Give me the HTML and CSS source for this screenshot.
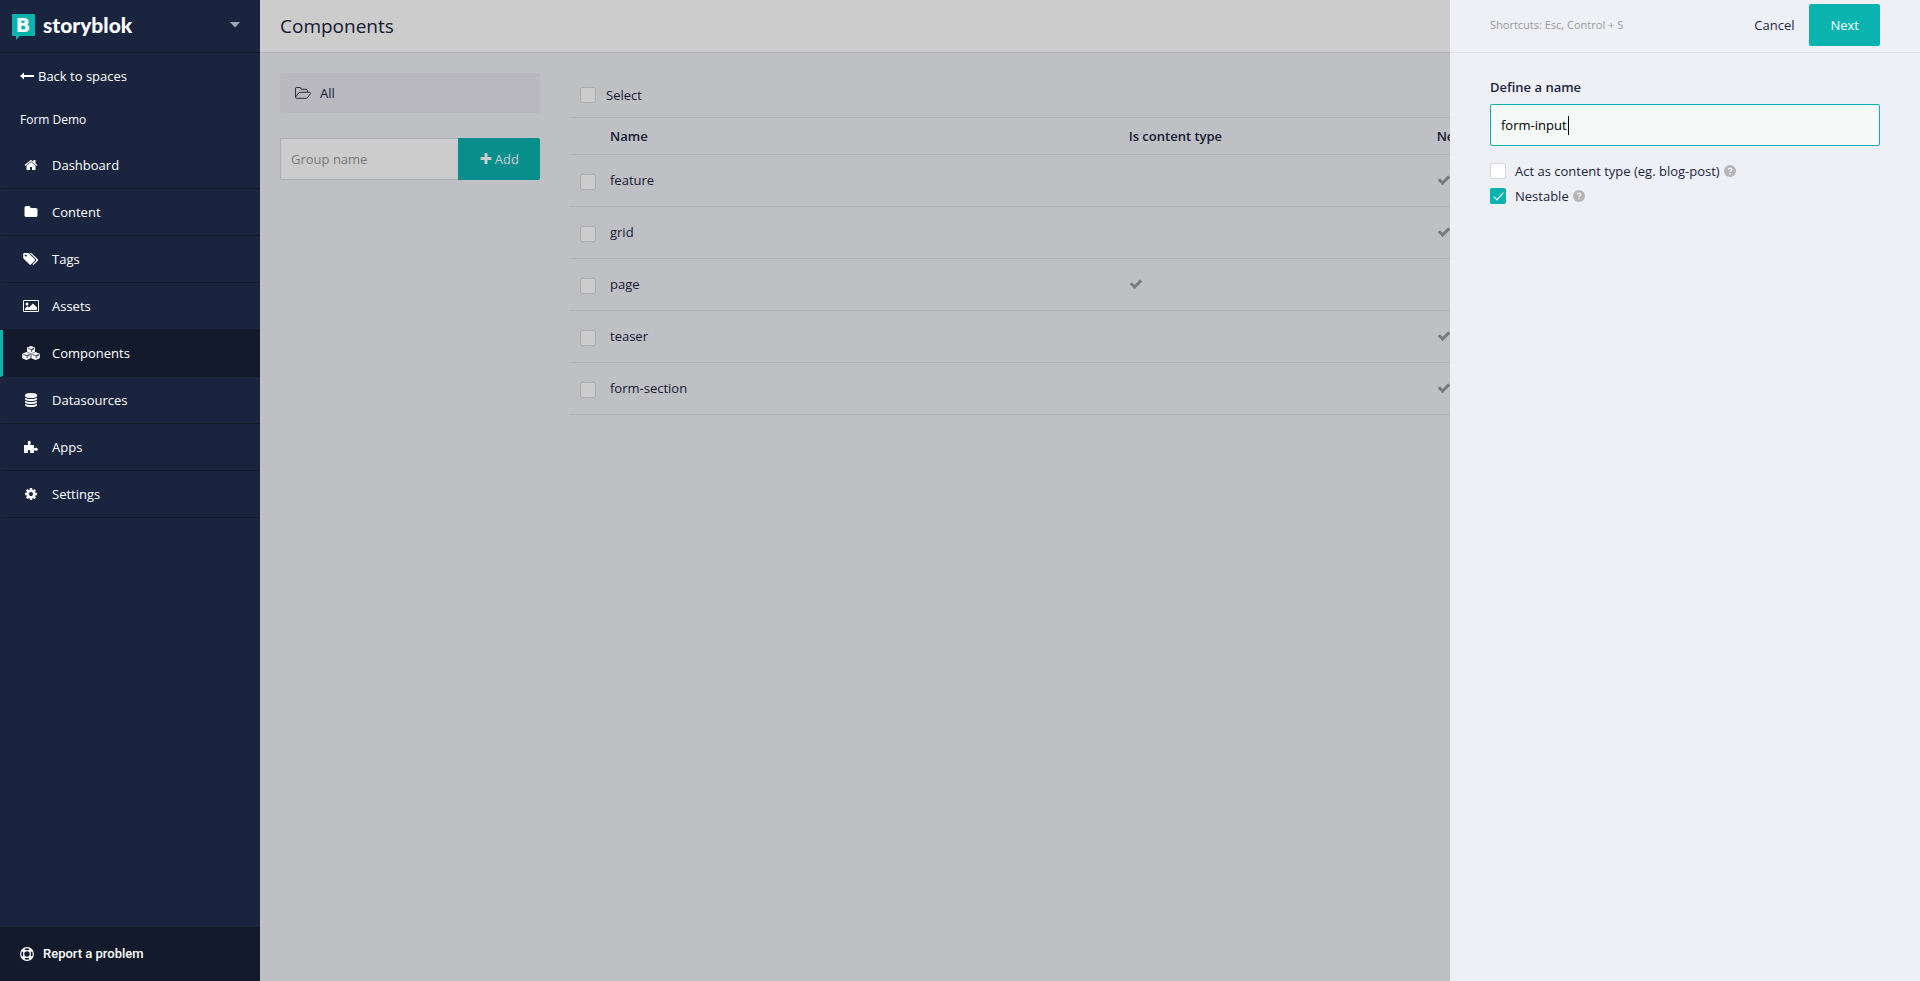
FILE: index.html
```html
<!DOCTYPE html>
<html lang="en">
<head>
    <meta charset="UTF-8">
    <meta name="viewport" content="width=device-width, initial-scale=1.0">
    <title>Components | Storyblok</title>
    <link rel="stylesheet" href="styles.css">
</head>
<body>
    <svg class="sprite" aria-hidden="true">
        <symbol id="check" viewBox="0 0 1792 1792"><path d="M1671 566q0 40-28 68l-724 724-136 136q-28 28-68 28t-68-28l-136-136-362-362q-28-28-28-68t28-68l136-136q28-28 68-28t68 28l294 295 656-657q28-28 68-28t68 28l136 136q28 28 28 68z"/></symbol>
        <symbol id="help" viewBox="0 0 12 12"><circle cx="6" cy="6" r="6"/><path d="M4.200 4.700C4.400 3.700 5.100 3.200 6 3.200c1 0 1.800.5 1.800 1.400C7.800 5.800 6 5.800 6 7" fill="none" stroke="#eff0f5" stroke-width="1.400"/><path d="M5.300 8h1.500v1.400H5.300z" fill="#eff0f5"/></symbol>
    </svg>

    <div class="app">
        <aside class="sidebar">
            <div class="sidebar-top">
                <a href="#" class="logo">
                    <svg width="23" height="27" viewBox="0 0 23 27">
                        <path fill="#0ab3af" d="M1 0h21a1 1 0 0 1 1 1v20a1 1 0 0 1-1 1H8l-4 4v-4H1a1 1 0 0 1-1-1V1a1 1 0 0 1 1-1z"/>
                        <text class="logo-letter" x="11" y="18" text-anchor="middle">B</text>
                    </svg>
                    <span>storyblok</span>
                </a>
                <button class="caret-button" aria-label="Open menu">
                    <svg width="10" height="6" viewBox="0 0 10 6"><path fill="#a4a8b4" d="M0 0h10L5 5.500z"/></svg>
                </button>
            </div>

            <a href="#" class="back-link">
                <svg width="14" height="8" viewBox="0 0 14 8"><path d="M0 4l4-3.500V3h10v2H4v2.500z"/></svg>
                <span>Back to spaces</span>
            </a>
            <div class="space-name">Form Demo</div>

            <nav class="nav">
                <a href="#" class="nav-item">
                    <svg class="nav-icon" viewBox="0 0 1792 1792"><path d="M1472 992v480q0 26-19 45t-45 19h-384v-384h-256v384h-384q-26 0-45-19t-19-45v-480q0-1 .5-3t.5-3l575-474 575 474q1 2 1 6zm223-69l-62 74q-8 9-21 11h-3q-13 0-21-7l-692-577-692 577q-12 8-24 7-13-2-21-11l-62-74q-8-10-7-23.500t11-21.500l719-599q32-26 76-26t76 26l244 204v-195q0-14 9-23t23-9h192q14 0 23 9t9 23v408l219 182q10 8 11 21.500t-7 23.500z"/></svg>
                    <span>Dashboard</span>
                </a>
                <a href="#" class="nav-item">
                    <svg class="nav-icon" viewBox="0 0 1792 1792"><path d="M1728 608v704q0 92-66 158t-158 66h-1216q-92 0-158-66t-66-158v-960q0-92 66-158t158-66h320q92 0 158 66t66 158v32h672q92 0 158 66t66 158z"/></svg>
                    <span>Content</span>
                </a>
                <a href="#" class="nav-item">
                    <svg class="nav-icon" viewBox="0 0 1856 1792"><path d="M384 448q0-53-37.500-90.500t-90.500-37.500-90.500 37.500-37.500 90.500 37.500 90.500 90.500 37.500 90.500-37.500 37.500-90.500zm1067 576q0 53-37 90l-491 492q-39 37-91 37-53 0-90-37l-715-716q-38-37-64.500-101t-26.500-117v-416q0-52 38-90t90-38h416q53 0 117 26.500t102 64.500l715 714q37 39 37 91zm384 0q0 53-37 90l-491 492q-39 37-91 37-36 0-59-14t-53-45l470-470q37-37 37-90 0-52-37-91l-715-714q-38-38-102-64.500t-117-26.500h224q53 0 117 26.500t102 64.500l715 714q37 39 37 91z"/></svg>
                    <span>Tags</span>
                </a>
                <a href="#" class="nav-item">
                    <svg class="nav-icon" viewBox="0 0 16 14"><path fill-rule="evenodd" d="M1.200 1h13.600A1.200 1.200 0 0 1 16 2.200v9.600a1.200 1.200 0 0 1-1.200 1.200H1.200A1.200 1.200 0 0 1 0 11.800V2.200A1.200 1.200 0 0 1 1.200 1zM1 2v10h14V2z"/><circle cx="4" cy="5" r="1.500"/><path d="M2 11V9.500L4.500 7 6 8.500 10 4.500l4 4V11z"/></svg>
                    <span>Assets</span>
                </a>
                <a href="#" class="nav-item active">
                    <svg class="nav-icon nav-icon-wide" viewBox="0 0 18 14"><path d="M9 0l4 1.600v4.200L9 7.600 5 5.800V1.600zM4.400 6l4.200 1.700v4.500L4.400 14 .2 12.200V7.700zM13.600 6l4.200 1.700v4.500L13.600 14l-4.200-1.800V7.700z"/><path class="cube-edge" d="M6 2.200l3 1.300 3-1.300M9.600 5.900V4l2.400-1M1.200 8.300l3.200 1.400 3.200-1.400M5 12.300v-2l2.600-1.100M10.400 8.300l3.200 1.400 3.200-1.400M14.200 12.300v-2l2.600-1.100"/></svg>
                    <span>Components</span>
                </a>
                <a href="#" class="nav-item">
                    <svg class="nav-icon" viewBox="0 0 1792 1792"><path d="M896 768q237 0 443-43t325-127v170q0 69-103 128t-280 93.500-385 34.500-385-34.500-280-93.500-103-128v-170q119 84 325 127t443 43zm0 768q237 0 443-43t325-127v170q0 69-103 128t-280 93.500-385 34.500-385-34.500-280-93.500-103-128v-170q119 84 325 127t443 43zm0-384q237 0 443-43t325-127v170q0 69-103 128t-280 93.500-385 34.500-385-34.500-280-93.500-103-128v-170q119 84 325 127t443 43zm0-1152q208 0 385 34.500t280 93.500 103 128v128q0 69-103 128t-280 93.500-385 34.500-385-34.500-280-93.500-103-128v-128q0-69 103-128t280-93.500 385-34.500z"/></svg>
                    <span>Datasources</span>
                </a>
                <a href="#" class="nav-item">
                    <svg class="nav-icon" viewBox="0 0 14 14"><path d="M0 5h3.600c.7 0 .7-.7.400-1.300C3.300 2.500 3.800.8 5.200.8s2 1.600 1.300 2.900c-.4.700-.2 1.300.5 1.300h3v2.600c0 .7.500.8 1.100.4 1.300-.8 2.700-.2 2.700 1.200s-1.400 2.100-2.700 1.300c-.6-.4-1.100-.2-1.100.4V13H6.600c-.8 0-.8-.6-.4-1.200.5-1-.1-1.800-1.100-1.800s-1.700.8-1.200 1.800c.3.600.3 1.200-.4 1.200H0z"/></svg>
                    <span>Apps</span>
                </a>
                <a href="#" class="nav-item">
                    <svg class="nav-icon" viewBox="0 0 1792 1792"><path d="M1152 896q0-106-75-181t-181-75-181 75-75 181 75 181 181 75 181-75 75-181zm512-109v222q0 12-8 23t-20 13l-185 28q-19 54-39 91 35 50 107 138 10 12 10 25t-9 23q-27 37-99 108t-94 71q-12 0-26-9l-138-108q-44 23-91 38-16 136-29 186-7 28-36 28h-222q-14 0-24.500-8.500t-11.500-21.500l-28-184q-49-16-90-37l-141 107q-10 9-25 9-14 0-25-11-126-114-165-168-7-10-7-23 0-12 8-23 15-21 51-66.500t54-70.500q-27-50-41-99l-183-27q-13-2-21-12.500t-8-23.500v-222q0-12 8-23t19-13l186-28q14-46 39-92-40-57-107-138-10-12-10-24 0-10 9-23 26-36 98.500-107.500t94.500-71.500q13 0 26 10l138 107q44-23 91-38 16-136 29-186 7-28 36-28h222q14 0 24.500 8.500t11.500 21.500l28 184q49 16 90 37l142-107q9-9 24-9 13 0 25 10 129 119 165 170 7 8 7 22 0 12-8 23-15 21-51 66.500t-54 70.500q26 50 41 98l183 28q13 2 21 12.500t8 23.500z"/></svg>
                    <span>Settings</span>
                </a>
            </nav>

            <a href="#" class="report">
                <svg width="14" height="14" viewBox="0 0 14 14" fill="none"><circle cx="7" cy="7" r="6.300" stroke="#fff" stroke-width="1.200"/><circle cx="7" cy="7" r="3.300" stroke="#fff" stroke-width="1.200"/><g stroke="#fff" stroke-width="3.200"><path d="M4.700 4.700L2.700 2.700M9.300 4.700l2-2M4.700 9.300l-2 2M9.300 9.300l2 2"/></g></svg>
                <span>Report a problem</span>
            </a>
        </aside>

        <div class="main">
            <header class="page-header">
                <h1>Components</h1>
            </header>

            <div class="content">
                <div class="groups">
                    <a href="#" class="group">
                        <svg width="16" height="12" viewBox="0 0 16 12" fill="none" stroke="#3a3a50"><path d="M.5 10V2A1.300 1.300 0 0 1 1.800.5h3A1.300 1.300 0 0 1 6.100 1.800v.5h5A1.300 1.300 0 0 1 12.400 3.600V5M1.400 11.300h9.800c.5 0 1-.3 1.400-.7l2.600-3.600c.6-.9.300-1.700-.7-1.700H5c-.5 0-1 .300-1.400.7L.9 9.600c-.6.900-.3 1.700.5 1.700z"/></svg>
                        <span>All</span>
                    </a>
                    <form class="group-form">
                        <input type="text" placeholder="Group name" aria-label="Group name">
                        <button type="button" class="button">
                            <svg width="14" height="14" viewBox="0 0 1792 1792"><path d="M1600 736v192q0 40-28 68t-68 28h-416v416q0 40-28 68t-68 28h-192q-40 0-68-28t-28-68v-416h-416q-40 0-68-28t-28-68v-192q0-40 28-68t68-28h416v-416q0-40 28-68t68-28h192q40 0 68 28t28 68v416h416q40 0 68 28t28 68z"/></svg>
                            <span>Add</span>
                        </button>
                    </form>
                </div>

                <div class="list">
                    <label class="select-all">
                        <input type="checkbox" class="checkbox">
                        <span>Select</span>
                    </label>
                    <table class="table">
                        <thead>
                            <tr>
                                <th class="col-check"></th>
                                <th class="col-name">Name</th>
                                <th class="col-type">Is content type</th>
                                <th>Nestable</th>
                            </tr>
                        </thead>
                        <tbody>
                            <tr>
                                <td><input type="checkbox" class="checkbox" aria-label="feature"></td>
                                <td>feature</td>
                                <td></td>
                                <td><svg class="tick"><use href="#check"/></svg></td>
                            </tr>
                            <tr>
                                <td><input type="checkbox" class="checkbox" aria-label="grid"></td>
                                <td>grid</td>
                                <td></td>
                                <td><svg class="tick"><use href="#check"/></svg></td>
                            </tr>
                            <tr>
                                <td><input type="checkbox" class="checkbox" aria-label="page"></td>
                                <td>page</td>
                                <td><svg class="tick"><use href="#check"/></svg></td>
                                <td></td>
                            </tr>
                            <tr>
                                <td><input type="checkbox" class="checkbox" aria-label="teaser"></td>
                                <td>teaser</td>
                                <td></td>
                                <td><svg class="tick"><use href="#check"/></svg></td>
                            </tr>
                            <tr>
                                <td><input type="checkbox" class="checkbox" aria-label="form-section"></td>
                                <td>form-section</td>
                                <td></td>
                                <td><svg class="tick"><use href="#check"/></svg></td>
                            </tr>
                        </tbody>
                    </table>
                </div>
            </div>

            <div class="overlay"></div>
        </div>
    </div>

    <form class="drawer">
        <div class="drawer-header">
            <span class="shortcuts">Shortcuts: Esc, Control + S</span>
            <button type="button" class="cancel">Cancel</button>
            <button type="button" class="button">Next</button>
        </div>
        <div class="drawer-body">
            <label class="field-label" for="name">Define a name</label>
            <div class="field">
                <input type="text" id="name" value="form-input">
                <span class="text-cursor"></span>
            </div>
            <div class="options">
                <div class="option">
                    <input type="checkbox" class="checkbox" id="content-type">
                    <label for="content-type">Act as content type (eg. blog-post)</label>
                    <svg class="help"><use href="#help"/></svg>
                </div>
                <div class="option">
                    <input type="checkbox" class="checkbox" id="nestable" checked>
                    <label for="nestable">Nestable</label>
                    <svg class="help"><use href="#help"/></svg>
                </div>
            </div>
        </div>
    </form>
</body>
</html>
```

FILE: styles.css
```css
* {
    box-sizing: border-box;
}

body {
    margin: 0;
    font-family: "Open Sans", "Noto Sans", sans-serif;
    font-size: 13px;
    line-height: 20px;
    color: #1b243f;
    background: #eff0f5;
}

a {
    color: inherit;
    text-decoration: none;
}

input, button {
    font: inherit;
    color: inherit;
}

button {
    padding: 0;
    border: none;
    background: none;
    cursor: pointer;
}

.sprite {
    position: absolute;
    width: 0;
    height: 0;
}

.app {
    display: flex;
    min-height: 100vh;
}

/* Sidebar */
.sidebar {
    display: flex;
    flex-direction: column;
    flex: none;
    width: 260px;
    color: #fff;
    font-weight: 500;
    background: #1b243f;
}

.sidebar svg {
    fill: #fff;
}

.sidebar-top {
    display: flex;
    align-items: center;
    justify-content: space-between;
    height: 53px;
    padding: 0 20px 0 12px;
    border-bottom: 1px solid #131a2b;
}

.logo {
    display: flex;
    align-items: center;
    gap: 8px;
    font-family: Lato, sans-serif;
    font-size: 21px;
    font-weight: 900;
}

.logo svg {
    margin-top: 2px;
}

.logo span {
    padding-bottom: 2px;
}

.logo-letter {
    font-family: "DejaVu Sans", sans-serif;
    font-size: 19px;
    font-weight: 700;
}

.caret-button {
    display: flex;
    padding-bottom: 2px;
}

.back-link {
    display: flex;
    align-items: center;
    gap: 4px;
    height: 46px;
    padding: 0 20px;
}

.space-name {
    padding: 11px 20px 12px;
    font-size: 12px;
}

.nav-item {
    display: flex;
    align-items: center;
    gap: 13px;
    height: 47px;
    padding: 0 20px 1px;
    border-bottom: 1px solid #131a2b;
    border-left: 3px solid transparent;
}

.nav-item.active {
    border-left-color: #0ab3af;
    background: #131a2b;
}

.nav-icon {
    width: 16px;
    height: 14px;
}

.nav-icon-wide {
    width: 18px;
    margin: 0 -1px;
}

.cube-edge {
    fill: none;
    stroke: #131a2b;
    stroke-width: .8;
}

.report {
    display: flex;
    align-items: center;
    gap: 9px;
    height: 54px;
    margin-top: auto;
    padding: 0 20px;
    font-family: Roboto, sans-serif;
    background: #131a2b;
}

.report svg {
    fill: none;
}

/* Main area */
.main {
    position: relative;
    flex: 1;
    min-width: 0;
}

.overlay {
    position: absolute;
    inset: 0;
    background: rgba(0, 0, 0, 0.2);
}

.page-header {
    display: flex;
    align-items: center;
    height: 53px;
    padding: 0 20px;
    border-bottom: 1px solid #dfdfdf;
    background: #fff;
}

h1 {
    margin: 0;
    font-size: 19px;
    font-weight: 400;
}

.content {
    display: flex;
    gap: 30px;
    padding: 20px;
}

.groups {
    flex: none;
    width: 260px;
}

.group {
    display: flex;
    align-items: center;
    gap: 9px;
    height: 40px;
    padding: 0 15px;
    border-radius: 3px;
    background: #e6e7ee;
}

.group-form {
    display: flex;
    margin-top: 25px;
}

.group-form input {
    flex: 1;
    min-width: 0;
    height: 42px;
    padding: 0 10px;
    border: 1px solid #d8d8d8;
    border-right: none;
    border-radius: 2px 0 0 2px;
    background: #fff;
}

.group-form input::placeholder {
    color: #999;
}

.button {
    display: flex;
    align-items: center;
    justify-content: center;
    gap: 2px;
    height: 42px;
    padding: 0 21px;
    border-radius: 2px;
    color: #fff;
    fill: #fff;
    font-weight: 500;
    background: #0ab3af;
}

.group-form .button {
    border-radius: 0 2px 2px 0;
}

.list {
    flex: 1;
    min-width: 0;
}

.select-all {
    display: flex;
    align-items: center;
    gap: 10px;
    height: 44px;
    padding: 0 10px;
}

.checkbox {
    appearance: none;
    display: block;
    flex: none;
    width: 16px;
    height: 16px;
    margin: 0;
    border: 1px solid #d8d8d8;
    border-radius: 2px;
    background: #fff;
}

.checkbox:checked {
    position: relative;
    border-color: #0ab3af;
    background: #0ab3af;
}

.checkbox:checked::after {
    content: "";
    position: absolute;
    top: 1px;
    left: 5px;
    width: 4px;
    height: 9px;
    border: solid #fff;
    border-width: 0 1px 1px 0;
    transform: rotate(42deg);
}

.table {
    width: 100%;
    table-layout: fixed;
    border-collapse: separate;
    border-spacing: 0;
    border-top: 1px solid #dedede;
}

.table th, .table td {
    padding: 0 10px;
    border-bottom: 1px solid #dedede;
    text-align: left;
}

.table th {
    height: 37px;
    font-weight: 600;
}

.table td {
    height: 52px;
    padding-bottom: 2px;
}

.table td:first-child {
    padding-top: 4px;
}

.table .col-check {
    width: 30px;
}

.col-name {
    width: 39%;
}

.col-type {
    width: 308px;
}

.tick {
    display: block;
    width: 14px;
    height: 14px;
    fill: #999;
}

/* Drawer */
.drawer {
    position: fixed;
    top: 0;
    right: 0;
    bottom: 0;
    width: 470px;
    background: #eff0f5;
}

.drawer-header {
    display: flex;
    align-items: center;
    gap: 15px;
    height: 53px;
    padding: 0 40px 2px;
    border-bottom: 1px solid #dfe0e0;
}

.shortcuts {
    flex: 1;
    font-size: 11px;
    color: #999;
}

.drawer-body {
    padding: 24px 40px;
}

.field-label {
    display: block;
    font-weight: 600;
}

.field {
    position: relative;
    margin-top: 7px;
}

.field input {
    display: block;
    width: 100%;
    height: 42px;
    padding: 0 10px;
    border: 1px solid #0ab3af;
    border-radius: 2px;
    outline: none;
    color: #000;
    background: #f5f9f8;
}

.text-cursor {
    position: absolute;
    top: 12px;
    left: 78px;
    width: 1px;
    height: 19px;
    background: #000;
}

.options {
    display: flex;
    flex-direction: column;
    gap: 5px;
    margin-top: 15px;
}

.option {
    display: flex;
    align-items: center;
}

.option label {
    margin: 0 4px 0 9px;
}

.help {
    width: 12px;
    height: 12px;
    fill: #b5b5b5;
}
```
